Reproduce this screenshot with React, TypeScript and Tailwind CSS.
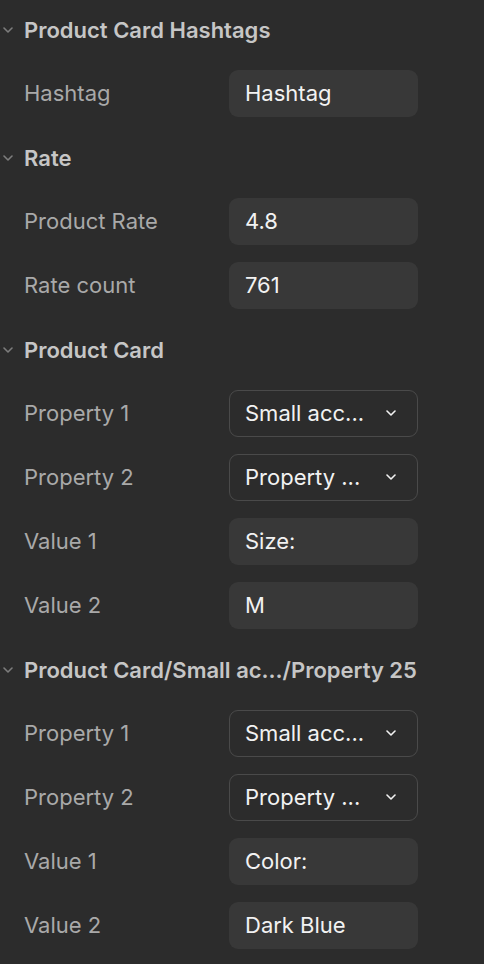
import type { ReactNode } from "react";

type Row =
  | { kind: "text"; label: string; value: string }
  | { kind: "select"; label: string; value: string };

const SECTIONS: { title: string; rows: Row[] }[] = [
  {
    title: "Product Card Hashtags",
    rows: [{ kind: "text", label: "Hashtag", value: "Hashtag" }],
  },
  {
    title: "Rate",
    rows: [
      { kind: "text", label: "Product Rate", value: "4.8" },
      { kind: "text", label: "Rate count", value: "761" },
    ],
  },
  {
    title: "Product Card",
    rows: [
      { kind: "select", label: "Property 1", value: "Small acc..." },
      { kind: "select", label: "Property 2", value: "Property ..." },
      { kind: "text", label: "Value 1", value: "Size:" },
      { kind: "text", label: "Value 2", value: "M" },
    ],
  },
  {
    title: "Product Card/Small ac\u2026/Property 25",
    rows: [
      { kind: "select", label: "Property 1", value: "Small acc..." },
      { kind: "select", label: "Property 2", value: "Property ..." },
      { kind: "text", label: "Value 1", value: "Color:" },
      { kind: "text", label: "Value 2", value: "Dark Blue" },
    ],
  },
];

function Chevron({ className }: { className?: string }) {
  return (
    <svg viewBox="0 0 10 6" className={className} fill="none" aria-hidden="true">
      <path d="M1 1l4 4 4-4" stroke="currentColor" strokeWidth="1.6" strokeLinecap="round" strokeLinejoin="round" />
    </svg>
  );
}

function SectionHeader({ children }: { children: ReactNode }) {
  return (
    <div className="flex h-16 items-center pt-[2px]">
      <div className="flex w-6 justify-center pr-[8px] text-[#7d7d7d]">
        <Chevron className="h-[6px] w-[10px]" />
      </div>
      <span className="whitespace-nowrap text-[22px] font-semibold text-[#c6c6c6]">{children}</span>
    </div>
  );
}

function PropertyRow({ row }: { row: Row }) {
  return (
    <div className="flex h-16 items-center">
      <span className="w-[229px] shrink-0 pl-6 text-[22px] text-[#a9a9a9]">{row.label}</span>
      {row.kind === "text" ? (
        <div className="flex h-[47px] w-[189px] items-center rounded-[9px] bg-[#383838] px-4 text-[22px] text-[#f2f2f2]">
          {row.value}
        </div>
      ) : (
        <div className="flex h-[47px] w-[189px] items-center justify-between rounded-[9px] border border-[#4a4a4a] pl-[15px] pr-[21px] text-[22px] text-[#f2f2f2]">
          <span>{row.value}</span>
          <Chevron className="h-[6px] w-[10px] text-[#f2f2f2]" />
        </div>
      )}
    </div>
  );
}

export default function App() {
  return (
    <div
      className="min-h-[964px] w-[484px] overflow-hidden bg-[#2c2c2c]"
      style={{ fontFamily: "Inter, 'Noto Sans', sans-serif" }}
    >
      <div className="-mt-[3px]">
        {SECTIONS.map((section) => (
          <div key={section.title}>
            <SectionHeader>{section.title}</SectionHeader>
            {section.rows.map((row, i) => (
              <PropertyRow key={i} row={row} />
            ))}
          </div>
        ))}
      </div>
    </div>
  );
}
